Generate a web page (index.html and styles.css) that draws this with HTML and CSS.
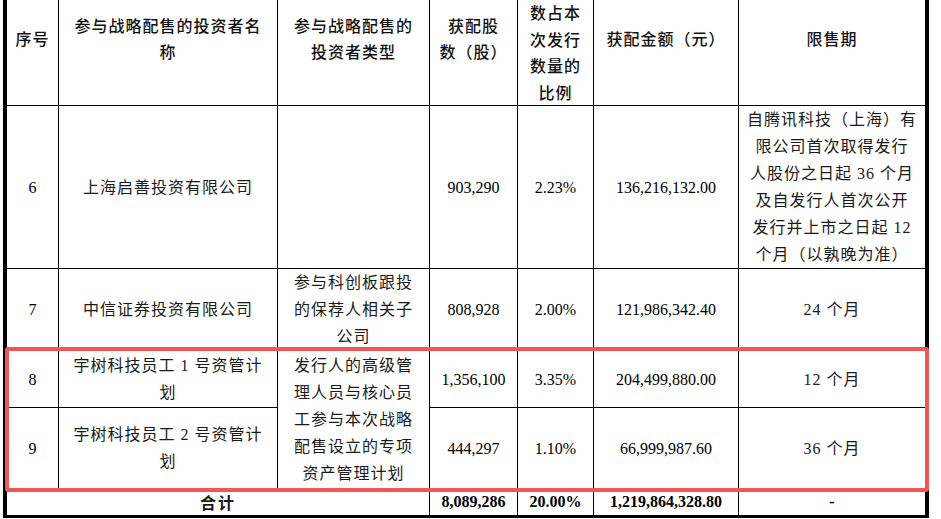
FILE: index.html
```html
<!DOCTYPE html>
<html lang="zh-CN">
<head>
<meta charset="utf-8">
<title>战略配售结果</title>
<link rel="stylesheet" href="styles.css">
</head>
<body>
<div class="page">
  <table class="alloc">
    <colgroup>
      <col class="c-no">
      <col class="c-name">
      <col class="c-type">
      <col class="c-shares">
      <col class="c-ratio">
      <col class="c-amount">
      <col class="c-lock">
    </colgroup>
    <thead>
      <tr class="r-head">
        <th class="lift">序号</th>
        <th class="lift">参与战略配售的投资者名<br>称</th>
        <th class="lift">参与战略配售的<br>投资者类型</th>
        <th class="lift">获配股<br>数（股）</th>
        <th>数占本<br>次发行<br>数量的<br>比例</th>
        <th class="lift">获配金额（元）</th>
        <th class="lift last">限售期</th>
      </tr>
    </thead>
    <tbody>
      <tr class="r6">
        <td class="num">6</td>
        <td>上海启善投资有限公司</td>
        <td></td>
        <td class="num">903,290</td>
        <td class="num">2.23%</td>
        <td class="num">136,216,132.00</td>
        <td class="last">自腾讯科技（上海）有<br>限公司首次取得发行<br>人股份之日起 36 个月<br>及自发行人首次公开<br>发行并上市之日起 12<br>个月（以孰晚为准）</td>
      </tr>
      <tr class="r7">
        <td class="num">7</td>
        <td>中信证券投资有限公司</td>
        <td>参与科创板跟投<br>的保荐人相关子<br>公司</td>
        <td class="num">808,928</td>
        <td class="num">2.00%</td>
        <td class="num">121,986,342.40</td>
        <td class="last">24 个月</td>
      </tr>
      <tr class="r8">
        <td class="num">8</td>
        <td>宇树科技员工 1 号资管计<br>划</td>
        <td rowspan="2">发行人的高级管<br>理人员与核心员<br>工参与本次战略<br>配售设立的专项<br>资产管理计划</td>
        <td class="num">1,356,100</td>
        <td class="num">3.35%</td>
        <td class="num">204,499,880.00</td>
        <td class="last">12 个月</td>
      </tr>
      <tr class="r9">
        <td class="num">9</td>
        <td>宇树科技员工 2 号资管计<br>划</td>
        <td class="num">444,297</td>
        <td class="num">1.10%</td>
        <td class="num">66,999,987.60</td>
        <td class="last">36 个月</td>
      </tr>
      <tr class="r-total">
        <td colspan="3" class="sum-label">合计</td>
        <td class="num bold">8,089,286</td>
        <td class="num bold">20.00%</td>
        <td class="num bold">1,219,864,328.80</td>
        <td class="num bold last">-</td>
      </tr>
    </tbody>
  </table>
  <div class="highlight"></div>
</div>
</body>
</html>
```
FILE: styles.css
```css
html, body {
  margin: 0;
  padding: 0;
  background: #ffffff;
}

body {
  font-family: "Liberation Serif", "Noto Sans CJK SC", serif;
  font-size: 16px;
  color: #1a1a1a;
}

.page {
  position: relative;
  width: 941px;
  margin-top: -1px;
}

.alloc {
  margin-left: 3px;
  width: 926px;
  table-layout: fixed;
  border-collapse: separate;
  border-spacing: 0;
  border-left: 4px solid #000;
  border-right: 4px solid #000;
  border-bottom: 3px solid #000;
}

.c-no { width: 52px; }
.c-name { width: 219px; }
.c-type { width: 152px; }
.c-shares { width: 88px; }
.c-ratio { width: 76px; }
.c-amount { width: 145px; }
.c-lock { width: 186px; }

.alloc th,
.alloc td {
  padding: 0;
  border-right: 1px solid #000;
  border-bottom: 1px solid #000;
  text-align: center;
  vertical-align: middle;
  white-space: nowrap;
  line-height: 27px;
  letter-spacing: 1px;
  font-weight: 400;
}

.alloc th {
  font-family: "Noto Sans CJK SC", sans-serif;
  font-weight: 500;
  line-height: 26.5px;
  color: #111;
}

.alloc .last {
  border-right: none;
}

.alloc .lift {
  padding-bottom: 28px;
}

.r-head { height: 107px; }
.r6 { height: 163px; }
.r7 { height: 81px; }
.r8 { height: 57px; }
.r9 { height: 81px; }
.r-total { height: 26px; }

.r-total td {
  border-bottom: none;
  line-height: 24px;
}

.alloc .num {
  letter-spacing: 0;
  color: #000;
}

.alloc .bold {
  font-weight: 700;
}

.alloc .sum-label {
  font-family: "Noto Sans CJK SC", sans-serif;
  font-weight: 700;
  letter-spacing: 2px;
}

.highlight {
  position: absolute;
  left: 5px;
  top: 348px;
  width: 924px;
  height: 145px;
  box-sizing: border-box;
  border: 4px solid #ef5757;
  border-radius: 3px;
  pointer-events: none;
}
```
